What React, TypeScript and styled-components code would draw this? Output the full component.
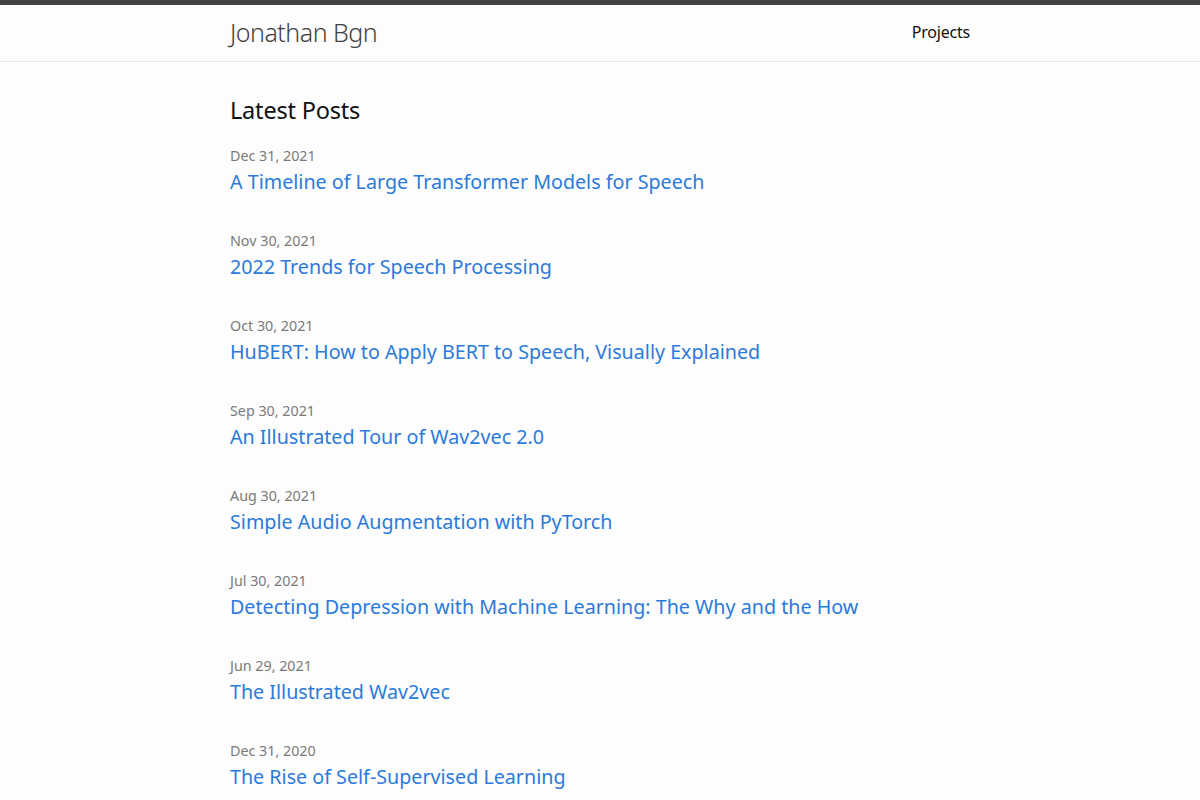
import React from "react";
import styled, { createGlobalStyle } from "styled-components";

const Global = createGlobalStyle`
  html, body { margin: 0; padding: 0; background: #fdfdfd; }
  body { font-family: "Noto Sans", "Open Sans", sans-serif; color: #111; }
  * { box-sizing: border-box; }
`;

const Header = styled.header`
  border-top: 5px solid #424242;
  border-bottom: 1px solid #e8e8e8;
  height: 62px;
`;

const Wrapper = styled.div`
  width: 740px;
  margin: 0 auto;
`;

const HeaderInner = styled(Wrapper)`
  display: flex;
  align-items: center;
  justify-content: space-between;
  height: 54px;
`;

const SiteTitle = styled.a`
  font-size: 25px;
  font-weight: 300;
  color: #424242;
  text-decoration: none;
  letter-spacing: -0.5px;
`;

const NavLink = styled.a`
  font-size: 16px;
  color: #111;
  text-decoration: none;
  letter-spacing: -0.2px;
`;

const Main = styled(Wrapper)`
  padding-top: 34px;
`;

const Heading = styled.h2`
  margin: 0 0 22px;
  font-size: 23.5px;
  font-weight: 400;
  line-height: 28px;
  letter-spacing: -0.2px;
`;

const PostList = styled.ul`
  list-style: none;
  margin: 0;
  padding: 0;
  display: flex;
  flex-direction: column;
  gap: 34px;
`;

const PostItem = styled.li`
  display: flex;
  flex-direction: column;
`;

const PostDate = styled.span`
  font-size: 14.3px;
  line-height: 20px;
  color: #7a7a7a;
`;

const PostLink = styled.a`
  font-size: 19.7px;
  line-height: 31px;
  color: #2c7ad9;
  text-decoration: none;
`;

const posts = [
  ["Dec 31, 2021", "A Timeline of Large Transformer Models for Speech"],
  ["Nov 30, 2021", "2022 Trends for Speech Processing"],
  ["Oct 30, 2021", "HuBERT: How to Apply BERT to Speech, Visually Explained"],
  ["Sep 30, 2021", "An Illustrated Tour of Wav2vec 2.0"],
  ["Aug 30, 2021", "Simple Audio Augmentation with PyTorch"],
  ["Jul 30, 2021", "Detecting Depression with Machine Learning: The Why and the How"],
  ["Jun 29, 2021", "The Illustrated Wav2vec"],
  ["Dec 31, 2020", "The Rise of Self-Supervised Learning"],
];

export default function App() {
  return (
    <>
      <Global />
      <Header>
        <HeaderInner>
          <SiteTitle href="#">Jonathan Bgn</SiteTitle>
          <NavLink href="#">Projects</NavLink>
        </HeaderInner>
      </Header>
      <Main>
        <Heading>Latest Posts</Heading>
        <PostList>
          {posts.map(([date, title]) => (
            <PostItem key={title}>
              <PostDate>{date}</PostDate>
              <PostLink href="#">{title}</PostLink>
            </PostItem>
          ))}
        </PostList>
      </Main>
    </>
  );
}
